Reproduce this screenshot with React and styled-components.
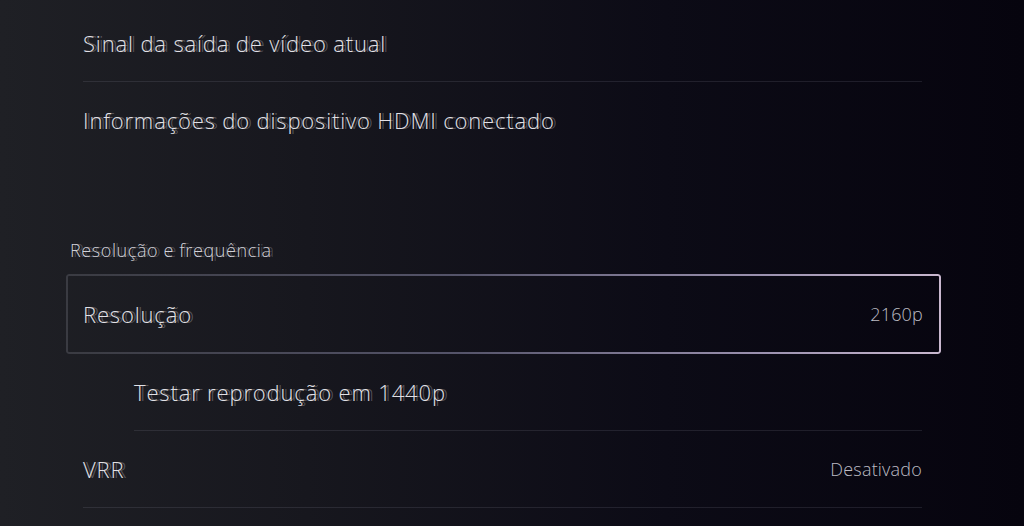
import styled, { createGlobalStyle } from 'styled-components';

const GlobalStyle = createGlobalStyle`
	html, body {
		margin: 0;
		padding: 0;
		background: #0a0912;
	}
	body {
		font-family: 'Open Sans', 'Noto Sans', sans-serif;
	}
`;

const Screen = styled.main`
	width: 1024px;
	height: 526px;
	overflow: hidden;
	background: linear-gradient(90deg, #1f2025 0%, #17171e 30%, #0c0b16 65%, #06040e 100%);
	box-sizing: border-box;
	padding: 5px 83px 0 66px;
`;

const Item = styled.div`
	position: relative;
	display: flex;
	align-items: center;
	justify-content: space-between;
	height: 77px;
	margin-left: ${(p) => p.$indent || 17}px;
	margin-right: 19px;
	box-sizing: border-box;
	border-bottom: 1px solid ${(p) => (p.$divider ? 'rgba(150, 150, 165, 0.16)' : 'transparent')};
`;

const FocusItem = styled.div`
	position: relative;
	display: flex;
	align-items: center;
	justify-content: space-between;
	height: 80px;
	padding: 0 18px 0 17px;
	box-sizing: border-box;
	margin-top: 12px;

	&::before {
		content: '';
		position: absolute;
		inset: 0;
		border-radius: 3px;
		padding: 2px;
		background: linear-gradient(90deg, #3a3b42 0%, #55546a 45%, #9c92b0 80%, #c9b8cf 100%);
		-webkit-mask: linear-gradient(#000 0 0) content-box, linear-gradient(#000 0 0);
		-webkit-mask-composite: xor;
		mask-composite: exclude;
	}
`;

const Label = styled.span`
	font-size: 22px;
	font-weight: 300;
	color: #e2e1e6;
	letter-spacing: 0.85px;
	text-shadow: 3px 0 0 rgba(205, 205, 215, 0.32);
`;

const Value = styled.span`
	font-size: 18px;
	font-weight: 300;
	color: #bdbcc4;
	letter-spacing: 0.2px;
`;

const SectionTitle = styled.div`
	margin-top: 79px;
	padding-left: 4px;
	font-size: 18px;
	font-weight: 300;
	color: #d2d1d8;
	letter-spacing: 0.6px;
	text-shadow: 3px 0 0 rgba(205, 205, 215, 0.28);
`;

export default function App() {
	return (
		<>
			<GlobalStyle />
			<Screen>
				<Item $divider>
					<Label>Sinal da saída de vídeo atual</Label>
				</Item>
				<Item>
					<Label>Informações do dispositivo HDMI conectado</Label>
				</Item>
				<SectionTitle>Resolução e frequência</SectionTitle>
				<FocusItem>
					<Label>Resolução</Label>
					<Value>2160p</Value>
				</FocusItem>
				<Item $indent={68} $divider>
					<Label>Testar reprodução em 1440p</Label>
				</Item>
				<Item $divider>
					<Label>VRR</Label>
					<Value>Desativado</Value>
				</Item>
			</Screen>
		</>
	);
}
